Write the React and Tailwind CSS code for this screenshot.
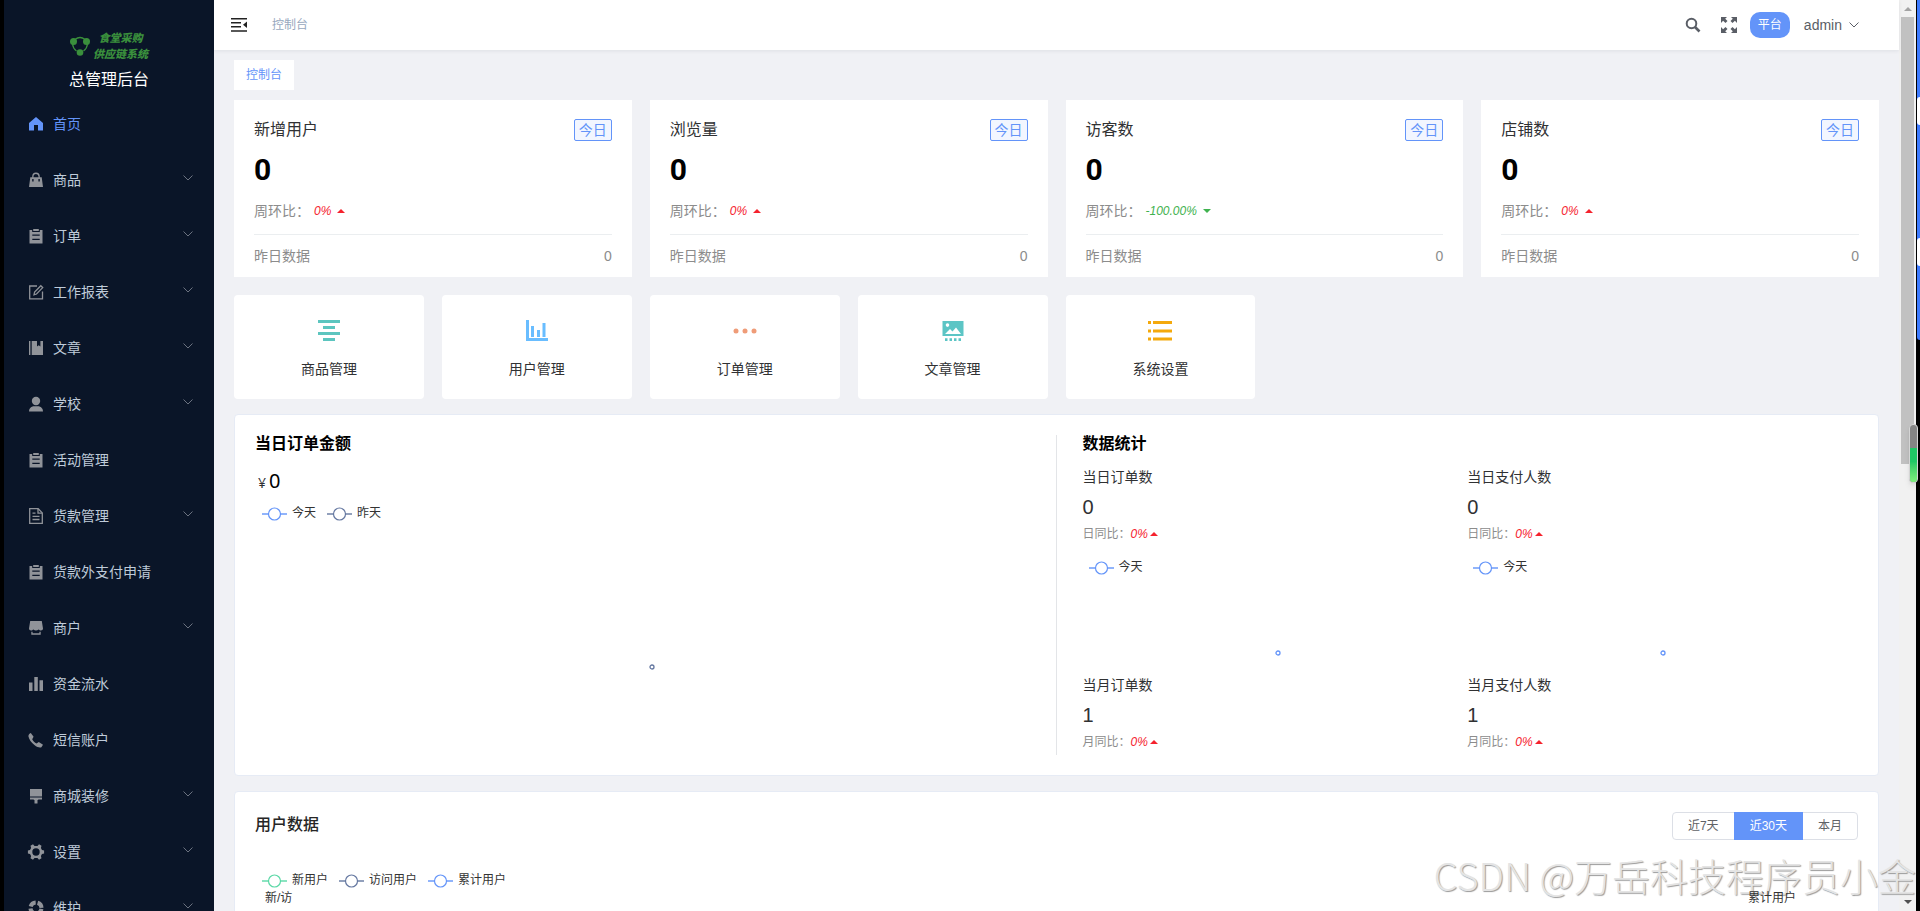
// App.jsx
import { useState } from 'react';

// Sidebar icons share an 18x18 box and inherit the text colour
const ICONS = {
  home: <path d="M9 2 2 8v7.5h5V10h4v5.5h5V8z" />,
  goods: (
    <path
      fillRule="evenodd"
      d="M5.2 6.2V5.4a3.8 3.8 0 0 1 7.6 0v.8h1.9L16 16H2L3.300 6.200zM6.500 6.200h5V5.400a2.500 2.500 0 0 0-5 0zM5.200 8v2.500h1.400V8zM11.400 8v2.500h1.400V8z"
    />
  ),
  order: (
    <path
      fillRule="evenodd"
      d="M3 3h2.200v2h7.600V3H15.500v13.500h-13V3zM6.200 2h5.600v2H6.200zM5.300 7.400v1.300h7.400V7.400zM5.300 11.800v1.300h7.400v-1.300z"
    />
  ),
  edit: (
    <g fill="none" stroke="currentColor" strokeWidth="1.3">
      <path d="M10 3H2.700v12.800h12.800V8.500" />
      <path d="M7 11.800l.6-2.700 6.200-6.400 1.900 1.900-6.200 6.400z" />
    </g>
  ),
  notebook: <path d="M2 2h1.400v14H2zM4.700 2H10v5.500l1.700-1.300 1.700 1.300V2H16v14H4.700z" />,
  user: (
    <g>
      <circle cx="9" cy="6" r="4.200" />
      <path d="M2 16.500c0-3.200 2.300-5.300 5-5.300h4c2.700 0 5 2.100 5 5.300z" />
    </g>
  ),
  document: (
    <g fill="none" stroke="currentColor" strokeWidth="1.300">
      <path d="M2.700 1.700h8.500l4.100 4.200v10.400H2.700z" />
      <path d="M11 1.900v4.200h4.200M5.500 6.200h3M5.500 9.300h7M5.500 12.500h7" />
    </g>
  ),
  shop: (
    <g>
      <path d="M3.200 2h11.600l1.200 7.500c0 1.200-.9 2-2 2s-1.700-.5-2.400-1c-.8.600-1.600 1-2.600 1s-1.800-.4-2.600-1c-.7.500-1.300 1-2.400 1s-2-.8-2-2z" />
      <path d="M4.300 12.700h1.300v1.500h6.800v-1.500h1.300v3.100H4.300z" />
    </g>
  ),
  bars: <path d="M2 7.500h3.500V16H2zM7.300 2h3.500v14H7.300zM12.500 5.300H16V16h-3.500z" />,
  phone: (
    <path d="M3.800 2 6.600 5.800 5.200 8.200c.8 1.700 2.500 3.300 4.300 4.200l2.300-1.300 4.200 2.700-1.600 2.400c-1.500.7-4 .2-7-2.200C4.300 11.600 2 8.300 1.400 5.200 1.400 3.800 2.400 2.500 3.800 2z" />
  ),
  brush: <path d="M3 2h12v7.500H3zM3 10.500h12v2h-3.800v.6h-.7v3.400h-3v-3.400h-.7v-.6H3z" />,
  setting: (
    <path
      fillRule="evenodd"
      d="M7.500 3 6 1.300 3.500 2.800 4.100 5 3 6.900.9 7.500v3l2.100.6L4.100 13l-.6 2.200L6 16.700 7.500 15h3l1.500 1.700 2.500-1.500-.6-2.200 1.100-1.900 2.100-.6v-3L15 6.900 13.900 5l.6-2.200L12 1.300 10.500 3zM9 5.300a3.700 3.700 0 1 1 0 7.400 3.700 3.700 0 0 1 0-7.400z"
    />
  ),
  help: (
    <g fill="none" stroke="currentColor" strokeWidth="4">
      <circle cx="9" cy="9" r="5.500" strokeDasharray="6.640 2" strokeDashoffset="7.640" />
    </g>
  ),
};

const MENU = [
  { label: '首页', icon: 'home', active: true },
  { label: '商品', icon: 'goods', children: true },
  { label: '订单', icon: 'order', children: true },
  { label: '工作报表', icon: 'edit', children: true },
  { label: '文章', icon: 'notebook', children: true },
  { label: '学校', icon: 'user', children: true },
  { label: '活动管理', icon: 'order' },
  { label: '货款管理', icon: 'document', children: true },
  { label: '货款外支付申请', icon: 'order' },
  { label: '商户', icon: 'shop', children: true },
  { label: '资金流水', icon: 'bars' },
  { label: '短信账户', icon: 'phone' },
  { label: '商城装修', icon: 'brush', children: true },
  { label: '设置', icon: 'setting', children: true },
  { label: '维护', icon: 'help', children: true },
];

const STATS = [
  { title: '新增用户', ratio: '0%' },
  { title: '浏览量', ratio: '0%' },
  { title: '访客数', ratio: '-100.00%', down: true },
  { title: '店铺数', ratio: '0%' },
];

const SHORTCUTS = [
  {
    label: '商品管理',
    icon: (
      <path fill="#5cc5bf" d="M1 1h22v3H1zM6 7h12v3H6zM1 13h22v3H1zM6 19h12v3H6z" />
    ),
  },
  {
    label: '用户管理',
    icon: <path fill="#69bdff" d="M1 1h3v18h19v3H1zM6 7h3v11H6zM12 11h3v7h-3zM17.500 4h3v14h-3z" />,
  },
  {
    label: '订单管理',
    icon: (
      <g fill="#ef9c78">
        <circle cx="3" cy="12" r="2.500" />
        <circle cx="12" cy="12" r="2.500" />
        <circle cx="21" cy="12" r="2.500" />
      </g>
    ),
  },
  {
    label: '文章管理',
    icon: (
      <path
        fill="#5cc5c5"
        fillRule="evenodd"
        d="M1.500 2h21v15h-21zM4 15h16l-5-6.500-3.500 4L9 10zM6.500 4.300a1.800 1.800 0 1 0 0 3.600 1.800 1.800 0 0 0 0-3.600zM4 19.300h2.500V22H4zM8.500 19.300H11V22H8.500zM13 19.300h2.500V22H13zM17.500 19.300H20V22h-2.500z"
      />
    ),
  },
  {
    label: '系统设置',
    icon: (
      <path
        fill="#f4a90c"
        d="M0 2h3v3H0zM5 2h19v3H5zM0 10.500h3v3H0zM5 10.500h19v3H5zM0 18.500h3v3H0zM5 18.500h19v3H5z"
      />
    ),
  },
];

const METRICS = [
  { label: '当日订单数', value: 0, prefix: '日同比：', chart: true },
  { label: '当日支付人数', value: 0, prefix: '日同比：', chart: true },
  { label: '当月订单数', value: 1, prefix: '月同比：' },
  { label: '当月支付人数', value: 1, prefix: '月同比：' },
];

const RANGES = ['近7天', '近30天', '本月'];

const Chevron = ({ className }) => (
  <svg className={className} width="12" height="12" viewBox="0 0 12 12" fill="none" stroke="currentColor">
    <path d="M1.500 3.500 6 8l4.500-4.500" />
  </svg>
);

const Caret = ({ down }) => (
  <svg width="8" height="4" viewBox="0 0 8 4" fill="currentColor">
    <path d={down ? 'M0 0h8L4 4z' : 'M0 4h8L4 0z'} />
  </svg>
);

const LegendItem = ({ color, label }) => (
  <span className="flex items-center gap-[5px] text-xs leading-4 text-[#333]">
    <svg width="25" height="16" viewBox="0 0 25 16" fill="none" stroke={color}>
      <path d="M0 9h6.500M18.500 9H25" strokeWidth="2" opacity="0.7" />
      <circle cx="12.500" cy="9" r="6" strokeWidth="1.200" />
    </svg>
    {label}
  </span>
);

const Dot = ({ color }) => (
  <svg width="6" height="6" viewBox="0 0 6 6" fill="#fff" stroke={color}>
    <circle cx="3" cy="3" r="2" strokeWidth="1.300" />
  </svg>
);

const Sidebar = () => (
  <aside className="flex w-[214px] shrink-0 flex-col border-l-4 border-black bg-[#0a1528]">
    <div className="flex h-24 shrink-0 flex-col items-center pt-[30px]">
      <div className="flex items-center gap-[3px] text-[#3a8f3c]">
        <svg width="20" height="20" viewBox="0 0 20 20">
          <path
            d="M5 3.500Q10-.5 15 3.500M2.500 8q.5 4.500 4 7M17.500 8q-.5 4.500-4 7"
            fill="none"
            stroke="currentColor"
            strokeWidth="1.300"
          />
          <g fill="currentColor">
            <circle cx="3.500" cy="5.500" r="3.500" />
            <circle cx="16.500" cy="5.500" r="3.500" />
            <circle cx="10" cy="16.500" r="3.300" />
          </g>
        </svg>
        <div className="text-center text-[11px] leading-4 font-black italic">
          <p>食堂采购</p>
          <p>供应链系统</p>
        </div>
      </div>
      <h1 className="mt-1.5 text-base leading-6 text-white">总管理后台</h1>
    </div>
    <nav>
      {MENU.map((item) => (
        <a
          key={item.label}
          href="#"
          className={`flex h-14 items-center pr-5 pl-[23px] text-sm ${item.active ? 'text-[#6394f9]' : 'text-[#bfcbd9]'}`}
        >
          <svg
            className={item.active ? 'shrink-0' : 'shrink-0 text-[#909399]'}
            width="18"
            height="18"
            viewBox="0 0 18 18"
            fill="currentColor"
          >
            {ICONS[item.icon]}
          </svg>
          <span className="ml-2 flex-1">{item.label}</span>
          {item.children && <Chevron className="mb-1 text-[#6b7280]" />}
        </a>
      ))}
    </nav>
  </aside>
);

const TopBar = () => (
  <header className="z-10 flex h-[50px] shrink-0 items-center bg-white pr-[39px] pl-[17px] shadow-[0_1px_4px_rgba(0,21,41,0.08)]">
    <button type="button" aria-label="收起菜单">
      <svg width="16" height="16" viewBox="0 0 16 16" fill="#222">
        <path d="M0 1h16v1.500H0zM0 5h10v1.500H0zM0 9h10v1.500H0zM0 13.300h16v1.500H0zM16 4.500v6.500L12 7.800z" />
      </svg>
    </button>
    <span className="ml-[25px] text-xs text-[#97a8be]">控制台</span>
    <div className="ml-auto flex items-center text-[#5a5e66]">
      <button type="button" aria-label="搜索">
        <svg width="16" height="16" viewBox="0 0 16 16" fill="none" stroke="currentColor">
          <circle cx="6.500" cy="6.500" r="4.800" strokeWidth="2" />
          <path d="m10 10 4.500 4.500" strokeWidth="2.600" />
        </svg>
      </button>
      <button type="button" aria-label="全屏" className="ml-5">
        <svg width="16" height="16" viewBox="0 0 16 16" fill="currentColor">
          <path d="M0 0h6L4.200 1.800l2.300 2.300-2 2-2.400-2.300L0 6zM16 0v6l-2.100-2.200-2.400 2.300-2-2 2.300-2.300L10 0zM0 16v-6l2.100 2.200 2.400-2.300 2 2-2.300 2.300L6 16zM16 16h-6l1.800-1.800-2.300-2.300 2-2 2.400 2.300L16 10z" />
        </svg>
      </button>
      <span className="ml-[13px] flex h-[26px] items-center rounded-[10px] bg-[#6394f9] px-2 text-xs text-white">平台</span>
      <button type="button" className="ml-3.5 flex items-center gap-1.5 text-sm">
        admin
        <Chevron />
      </button>
    </div>
  </header>
);

const StatCard = ({ title, ratio, down }) => (
  <section className="bg-white px-5 pt-[19px] pb-[11px]">
    <div className="flex h-[22px] items-center justify-between">
      <h2 className="text-base leading-5 text-[#303133]">{title}</h2>
      <span className="flex h-[22px] items-center rounded-xs border border-[#6394f9] bg-[#f2f6ff] px-1 text-sm text-[#6394f9]">
        今日
      </span>
    </div>
    <p className="mt-[13px] font-[Roboto] text-3xl leading-8 font-bold text-black">0</p>
    <p className="mt-[15px] flex items-center text-sm leading-5 text-[#8c8c8c]">
      周环比：
      <span className={`ml-1 flex items-center gap-1.5 text-xs italic ${down ? 'text-[#3fb24f]' : 'text-[#f5222d]'}`}>
        {ratio}
        <Caret down={down} />
      </span>
    </p>
    <div className="mt-[13px] flex justify-between border-t border-[#ebeef0] pt-[11px] text-sm leading-5 text-[#8c8c8c]">
      <span>昨日数据</span>
      <span>0</span>
    </div>
  </section>
);

const Metric = ({ label, value, prefix, chart }) => (
  <div>
    <h3 className="text-sm leading-5 text-[#303133]">{label}</h3>
    <p className="mt-[7px] text-xl leading-[26px] text-[#303133]">{value}</p>
    <p className="mt-1.5 flex items-center text-xs leading-4 text-[#8c8c8c]">
      {prefix}
      <span className="flex items-center gap-0.5 text-[#f5222d] italic">
        0%
        <Caret />
      </span>
    </p>
    {chart && (
      <div className="mt-[17px] h-[116px] pl-1.5">
        <LegendItem color="#6394f9" label="今天" />
        <div className="flex justify-center pt-[75px]">
          <Dot color="#6394f9" />
        </div>
      </div>
    )}
  </div>
);

const OrderPanel = () => (
  <section className="mt-[15px] flex rounded border border-[#e6ebf5] bg-white p-5">
    <div className="w-1/2 border-r border-[#e3e5e8]">
      <h2 className="text-base leading-[18px] font-bold text-black">当日订单金额</h2>
      <p className="mt-4 flex items-baseline gap-[3px] pl-[3px] font-['Noto_Sans'] text-xl leading-6 text-black">
        <span className="text-sm text-[#303133]">¥</span>0
      </p>
      <div className="mt-3 flex gap-[11px] pl-[7px]">
        <LegendItem color="#6394f9" label="今天" />
        <LegendItem color="#6477a0" label="昨天" />
      </div>
      <div className="flex justify-center pt-[143px] pr-1.5">
        <Dot color="#6477a0" />
      </div>
    </div>
    <div className="w-1/2 pr-1.5 pl-[26px]">
      <h2 className="text-base leading-[18px] font-bold text-black">数据统计</h2>
      <div className="grid h-[302px] grid-cols-2 content-start pt-3.5">
        {METRICS.map((metric) => (
          <Metric key={metric.label} {...metric} />
        ))}
      </div>
    </div>
  </section>
);

const UserPanel = () => {
  const [range, setRange] = useState('近30天');

  return (
    <section className="mt-[15px] h-[420px] rounded border border-[#e6ebf5] bg-white p-5">
      <div className="flex items-start justify-between">
        <h2 className="text-base leading-[26px] font-medium text-[#262626]">用户数据</h2>
        <div className="flex h-7 text-xs">
          {RANGES.map((item) => (
            <button
              key={item}
              type="button"
              onClick={() => setRange(item)}
              className={`border px-[15px] not-first:-ml-px first:rounded-l last:rounded-r ${
                range === item ? 'z-10 border-[#6394f9] bg-[#6394f9] text-white' : 'border-[#dcdfe6] text-[#606266]'
              }`}
            >
              {item}
            </button>
          ))}
        </div>
      </div>
      <div className="mt-8 flex gap-[11px] pl-[7px]">
        <LegendItem color="#5ad8a6" label="新用户" />
        <LegendItem color="#6477a0" label="访问用户" />
        <LegendItem color="#6394f9" label="累计用户" />
      </div>
      <div className="relative z-30 mt-0.5 flex justify-between pr-[62px] pl-2.5 text-xs leading-4 text-[#333]">
        <span>新/访</span>
        <span>累计用户</span>
      </div>
    </section>
  );
};

const ScrollTrack = () => (
  <div className="flex w-[21px] shrink-0 bg-black">
    <div className="flex w-[17px] flex-col items-center bg-[#f1f1f1]">
      <svg className="shrink-0" width="17" height="17" viewBox="0 0 17 17" fill="#a3a3a3">
        <path d="M5 11h8L9 7z" />
      </svg>
      <div className="h-[447px] w-[13px] shrink-0 bg-[#c1c1c1]" />
      <svg className="mt-auto shrink-0" width="17" height="17" viewBox="0 0 17 17" fill="#505050">
        <path d="M5 6h8l-4 4z" />
      </svg>
    </div>
    <div className="ml-px flex h-[340px] flex-1 flex-col overflow-hidden rounded-bl bg-[#3f7cff] pt-[97px]">
      <div className="h-7 rounded-l bg-white" />
      <div className="mt-[113px] h-7 rounded-l bg-white" />
    </div>
  </div>
);

const App = () => (
  <div className="relative flex h-screen overflow-hidden bg-[#f0f1f5] font-['Liberation_Sans','Noto_Sans_CJK_SC',sans-serif]">
    <Sidebar />
    <div className="flex min-w-0 flex-1 flex-col">
      <TopBar />
      <main className="min-h-0 flex-1 overflow-hidden px-5 pt-2.5">
        <a href="#" className="flex h-[30px] w-fit items-center bg-white px-3 text-xs text-[#6394f9]">
          控制台
        </a>
        <div className="mt-2.5 grid grid-cols-4 gap-[18px]">
          {STATS.map((stat) => (
            <StatCard key={stat.title} {...stat} />
          ))}
        </div>
        <div className="mt-[18px] grid grid-cols-8 gap-[18px]">
          {SHORTCUTS.map((item) => (
            <a
              key={item.label}
              href="#"
              className="flex h-[104px] flex-col items-center rounded bg-white pt-6 text-sm leading-5 text-[#303133]"
            >
              <svg width="24" height="24" viewBox="0 0 24 24">
                {item.icon}
              </svg>
              <span className="mt-4">{item.label}</span>
            </a>
          ))}
        </div>
        <OrderPanel />
        <UserPanel />
      </main>
    </div>
    <ScrollTrack />

    {/* floating level meter on the screen edge */}
    <div className="absolute top-[424px] right-0.5 h-[59px] w-[9px] overflow-hidden rounded border border-[#d5d5d5] bg-[#858585] pt-[23px] shadow-md">
      <div className="h-full bg-linear-to-b from-[#1fc765] from-40% to-[#7df07d]" />
    </div>
    <p className="pointer-events-none absolute right-1 bottom-3 z-20 font-['Noto_Sans_CJK_SC',sans-serif] text-[38px] leading-12 font-light whitespace-nowrap text-[#e4e4e4] [text-shadow:1px_1px_1px_#999]">
      CSDN @万岳科技程序员小金
    </p>
  </div>
);

export default App;
